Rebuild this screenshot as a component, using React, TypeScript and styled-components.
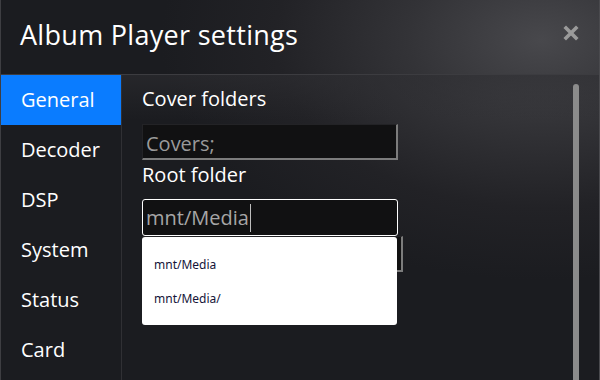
import styled, { createGlobalStyle } from "styled-components";

const GlobalStyle = createGlobalStyle`
  html, body {
    margin: 0;
    padding: 0;
    background: #1b1c20;
  }
  * {
    box-sizing: border-box;
  }
`;

const tabs = ["General", "Decoder", "DSP", "System", "Status", "Card"];

export default function App() {
  return (
    <>
      <GlobalStyle />
      <Dialog>
        <Header>
          <Title>Album Player settings</Title>
          <CloseButton aria-label="close">
            <svg width="16" height="16" viewBox="0 0 16 16">
              <path
                d="M3 3 L13 13 M13 3 L3 13"
                stroke="#9a9a9a"
                strokeWidth="3.6"
                strokeLinecap="square"
              />
            </svg>
          </CloseButton>
        </Header>
        <Body>
          <Sidebar>
            {tabs.map((tab, i) => (
              <Tab key={tab} $active={i === 0}>
                {tab}
              </Tab>
            ))}
          </Sidebar>
          <Content>
            <Form>
              <Label>Cover folders</Label>
              <InsetField $width={256}>Covers;</InsetField>
              <Label $gap={2} $after={11}>
                Root folder
              </Label>
              <ComboWrap>
                <ActiveField>
                  mnt/Media
                  <Caret />
                </ActiveField>
                <InsetField $width={261} />
                <Suggestions>
                  <Suggestion>mnt/Media</Suggestion>
                  <Suggestion>mnt/Media/</Suggestion>
                </Suggestions>
              </ComboWrap>
            </Form>
            <ScrollThumb />
          </Content>
        </Body>
      </Dialog>
    </>
  );
}

const Dialog = styled.div`
  width: 600px;
  height: 380px;
  overflow: hidden;
  display: flex;
  flex-direction: column;
  border-left: 1px solid #3e3e42;
  border-right: 1px solid #4a4a4e;
  font-family: "Open Sans", "Noto Sans", sans-serif;
  color: #ffffff;
  background: radial-gradient(
    ellipse 380px 240px at 540px 40px,
    #48484c 0%,
    #333337 35%,
    #222226 70%,
    #1b1c20 100%
  );
`;

const Header = styled.div`
  height: 75px;
  flex-shrink: 0;
  display: flex;
  align-items: center;
  justify-content: space-between;
  padding: 0 20px 5px 19px;
  border-bottom: 1px solid #3c3c40;
`;

const Title = styled.h1`
  margin: 0;
  font-size: 27px;
  font-weight: 400;
  letter-spacing: 0.3px;
`;

const CloseButton = styled.div`
  width: 16px;
  height: 16px;
  display: flex;
  margin-top: -3px;
`;

const Body = styled.div`
  flex: 1;
  display: flex;
  min-height: 0;
`;

const Sidebar = styled.div`
  width: 121px;
  flex-shrink: 0;
  border-right: 1px solid #303034;
  background: #1b1c20;
`;

const Tab = styled.div<{ $active?: boolean }>`
  height: 50px;
  display: flex;
  align-items: center;
  padding: 0 0 1px 20px;
  font-size: 20px;
  background: ${(p) => (p.$active ? "#0a7cff" : "transparent")};
`;

const Content = styled.div`
  flex: 1;
  display: flex;
  background: linear-gradient(to bottom, rgba(46, 46, 50, 0.6), rgba(27, 28, 32, 0) 45px);
`;

const Form = styled.div`
  flex: 1;
  padding: 11px 0 0 20px;
  display: flex;
  flex-direction: column;
  align-items: flex-start;
`;

const Label = styled.div<{ $gap?: number; $after?: number }>`
  font-size: 20px;
  line-height: 26px;
  margin-top: ${(p) => p.$gap ?? 0}px;
  margin-bottom: ${(p) => p.$after ?? 12}px;
`;

const InsetField = styled.div<{ $width: number }>`
  width: ${(p) => p.$width}px;
  height: 36px;
  display: flex;
  align-items: center;
  padding: 3px 0 0 3px;
  background: #111112;
  border-style: solid;
  border-width: 1px 2px 2px 1px;
  border-color: #232326 #7c7c7c #7c7c7c #232326;
  font-size: 20px;
  color: #9a9a9a;
`;

const ComboWrap = styled.div`
  position: relative;
  display: flex;
  flex-direction: column;
`;

const ActiveField = styled.div`
  width: 256px;
  height: 37px;
  display: flex;
  align-items: center;
  padding-left: 3px;
  background: #111112;
  border: 1px solid #ffffff;
  border-radius: 3px;
  font-size: 20px;
  color: #a6a6a6;
`;

const Caret = styled.span`
  width: 1px;
  height: 28px;
  margin-left: 1px;
  background: #bdbdbd;
`;

const Suggestions = styled.div`
  position: absolute;
  top: 38px;
  left: 0;
  width: 255px;
  height: 88px;
  padding-top: 10px;
  background: #ffffff;
  border-radius: 3px;
`;

const Suggestion = styled.div`
  height: 34px;
  display: flex;
  align-items: center;
  padding-left: 12px;
  font-family: "Noto Sans", "Open Sans", sans-serif;
  font-size: 12px;
  color: #141438;
`;

const ScrollThumb = styled.div`
  width: 6px;
  margin: 9px 20px 0 0;
  background: #8b8b8b;
  border-radius: 3px 3px 0 0;
`;
